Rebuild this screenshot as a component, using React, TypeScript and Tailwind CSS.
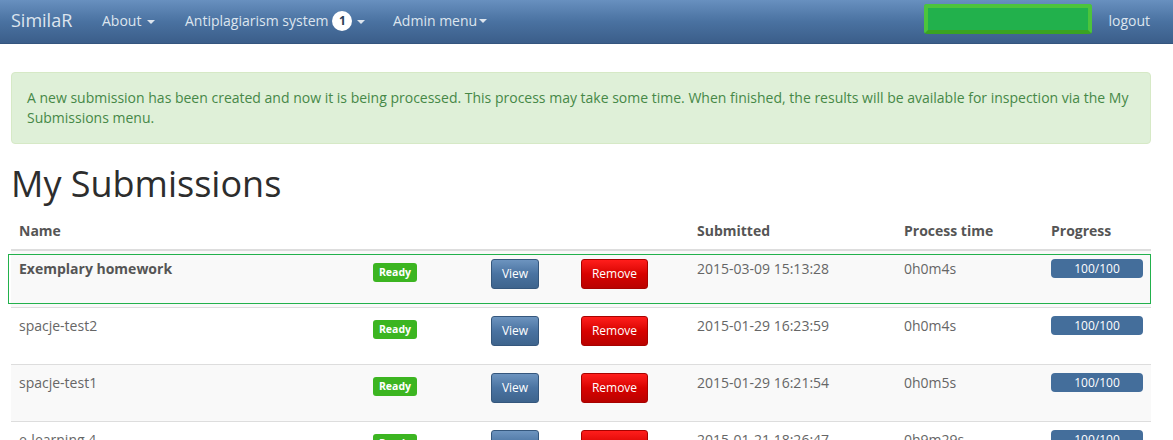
import React from 'react';

type Submission = {
  name: string;
  submitted: string;
  time: string;
  bold?: boolean;
};

const rows: Submission[] = [
  { name: 'Exemplary homework', submitted: '2015-03-09 15:13:28', time: '0h0m4s', bold: true },
  { name: 'spacje-test2', submitted: '2015-01-29 16:23:59', time: '0h0m4s' },
  { name: 'spacje-test1', submitted: '2015-01-29 16:21:54', time: '0h0m5s' },
  { name: 'e-learning 4', submitted: '2015-01-21 18:26:47', time: '0h9m29s' },
];

const cols = 'grid grid-cols-[354px_118px_90px_116px_207px_147px_108px]';

const Caret = () => (
  <span className="inline-block w-0 h-0 ml-[2px] align-middle border-x-[4px] border-x-transparent border-t-[4px] border-t-[#dde5ee]" />
);

const Navbar = () => (
  <div className="h-[44px] pb-[2px] flex items-center bg-gradient-to-b from-[#6890bf] via-[#4a72a1] to-[#3b5e8a] border-b border-[#34557e] text-[#dde5ee] text-[14px]">
    <span className="ml-[11px] text-[18px] w-[91px]">SimilaR</span>
    <span className="w-[83px]">
      About <Caret />
    </span>
    <span className="flex items-center w-[208px]">
      Antiplagiarism system
      <span className="ml-[4px] w-[20px] h-[20px] rounded-full bg-white text-[#2b3e57] text-[12px] font-bold flex items-center justify-center">1</span>
      <span className="ml-[3px]"><Caret /></span>
    </span>
    <span className="flex items-center">
      Admin menu<Caret />
    </span>
    <div className="flex-1" />
    <div className="w-[168px] h-[30px] mt-[-4px] rounded-[3px] border-4 border-[#4cc43c] border-b-[#3aa322] bg-[#22b14c]" />
    <span className="ml-[16px] mr-[23px]">logout</span>
  </div>
);

const Row = ({ r, i }: { r: Submission; i: number }) => (
  <div className={`relative ${cols} ${i > 0 ? 'h-[57px] border-t border-[#dddddd]' : 'h-[56px]'} ${i % 2 === 0 ? 'bg-[#f9f9f9]' : 'bg-white'} text-[14px] leading-[20px] text-[#666666]`}>
    {i === 0 && <div className="absolute top-[3px] bottom-[3px] left-[-3px] right-0 border border-[#22b14c] pointer-events-none" />}
    <div className={`px-2 pt-2 ${r.bold ? 'font-bold text-[#555555]' : ''}`}>{r.name}</div>
    <div className="px-2 pt-[10px]">
      <span className="inline-block h-[19px] w-[44px] rounded-[3px] bg-[#3cb521] text-white text-[10.5px] font-bold leading-[19px] text-center">Ready</span>
    </div>
    <div className="px-2 pt-2">
      <button className="h-[30px] w-[48px] rounded-[3px] border border-[#35577d] bg-gradient-to-b from-[#6d94bf] via-[#4a73a1] to-[#3e648d] text-white text-[12px]">View</button>
    </div>
    <div className="px-2 pt-2">
      <button className="h-[30px] w-[67px] rounded-[3px] border border-[#a80200] bg-gradient-to-b from-[#ff1d1b] via-[#d80200] to-[#b90200] text-white text-[12px]">Remove</button>
    </div>
    <div className="px-2 pt-2">{r.submitted}</div>
    <div className="px-2 pt-2">{r.time}</div>
    <div className="px-2 pt-2">
      <div className="h-[19px] rounded-[4px] bg-[#446e9b] text-white text-[12px] leading-[19px] text-center">100/100</div>
    </div>
  </div>
);

export default function App() {
  return (
    <div className="w-[1173px] h-[440px] overflow-hidden bg-white" style={{ fontFamily: '"Open Sans", "Liberation Sans", sans-serif' }}>
      <Navbar />
      <div className="px-[11px] pr-[22px]">
        <div className="mt-[28px] rounded-[4px] border border-[#d6e9c6] bg-[#dff0d8] px-[15px] py-[15px] text-[14px] leading-[20px] text-[#468847]">
          A new submission has been created and now it is being processed. This process may take some time. When finished, the results will be available for inspection via the My Submissions menu.
        </div>
        <h1 className="mt-[20px] mb-[9px] text-[36px] leading-[40px] text-[#2d2d2d]">My Submissions</h1>
        <div className={`${cols} h-[38px] border-b-2 border-[#dddddd] text-[14px] leading-[20px] font-bold text-[#555555]`}>
          <div className="px-2 pt-2">Name</div>
          <div />
          <div />
          <div />
          <div className="px-2 pt-2">Submitted</div>
          <div className="px-2 pt-2">Process time</div>
          <div className="px-2 pt-2">Progress</div>
        </div>
        {rows.map((r, i) => (
          <Row key={r.name} r={r} i={i} />
        ))}
      </div>
    </div>
  );
}
